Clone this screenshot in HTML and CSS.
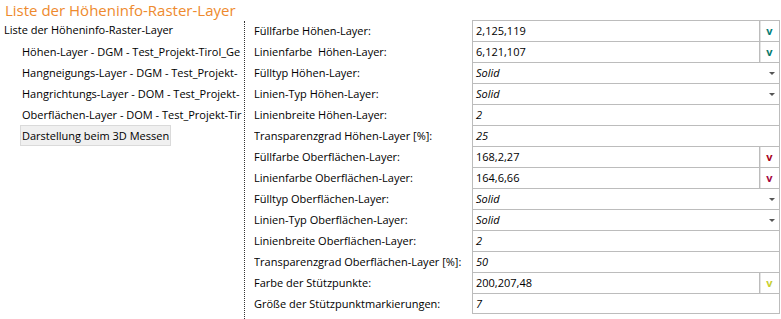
FILE: index.html
```html
<!DOCTYPE html>
<html lang="de">
<head>
  <meta charset="UTF-8">
  <title>Höheninfo-Raster-Layer</title>
  <link rel="stylesheet" href="styles.css">
</head>
<body>
  <h1 class="title">Liste der Höheninfo-Raster-Layer</h1>
  <div class="main">
    <div class="tree">
      <div class="tree-root">Liste der Höheninfo-Raster-Layer</div>
      <div class="tree-item">Höhen-Layer - DGM - Test_Projekt-Tirol_Ge</div>
      <div class="tree-item">Hangneigungs-Layer - DGM - Test_Projekt-</div>
      <div class="tree-item">Hangrichtungs-Layer - DOM - Test_Projekt-</div>
      <div class="tree-item">Oberflächen-Layer - DOM - Test_Projekt-Tir</div>
      <div class="tree-item"><span class="selected">Darstellung beim 3D Messen</span></div>
    </div>

    <div class="props">
      <div class="row">
        <div class="label">Füllfarbe Höhen-Layer:</div>
        <div class="value"><span class="text">2,125,119</span><span class="color-btn" style="color: rgb(2,125,119);">v</span></div>
      </div>
      <div class="row">
        <div class="label">Linienfarbe&nbsp; Höhen-Layer:</div>
        <div class="value"><span class="text">6,121,107</span><span class="color-btn" style="color: rgb(6,121,107);">v</span></div>
      </div>
      <div class="row">
        <div class="label">Fülltyp Höhen-Layer:</div>
        <div class="value"><span class="text italic">Solid</span><span class="arrow"></span></div>
      </div>
      <div class="row">
        <div class="label">Linien-Typ Höhen-Layer:</div>
        <div class="value"><span class="text italic">Solid</span><span class="arrow"></span></div>
      </div>
      <div class="row">
        <div class="label">Linienbreite Höhen-Layer:</div>
        <div class="value"><span class="text italic">2</span></div>
      </div>
      <div class="row">
        <div class="label">Transparenzgrad Höhen-Layer [%]:</div>
        <div class="value"><span class="text italic">25</span></div>
      </div>
      <div class="row">
        <div class="label">Füllfarbe Oberflächen-Layer:</div>
        <div class="value"><span class="text">168,2,27</span><span class="color-btn" style="color: rgb(168,2,27);">v</span></div>
      </div>
      <div class="row">
        <div class="label">Linienfarbe Oberflächen-Layer:</div>
        <div class="value"><span class="text">164,6,66</span><span class="color-btn" style="color: rgb(164,6,66);">v</span></div>
      </div>
      <div class="row">
        <div class="label">Fülltyp Oberflächen-Layer:</div>
        <div class="value"><span class="text italic">Solid</span><span class="arrow"></span></div>
      </div>
      <div class="row">
        <div class="label">Linien-Typ Oberflächen-Layer:</div>
        <div class="value"><span class="text italic">Solid</span><span class="arrow"></span></div>
      </div>
      <div class="row">
        <div class="label">Linienbreite Oberflächen-Layer:</div>
        <div class="value"><span class="text italic">2</span></div>
      </div>
      <div class="row">
        <div class="label">Transparenzgrad Oberflächen-Layer [%]:</div>
        <div class="value"><span class="text italic">50</span></div>
      </div>
      <div class="row">
        <div class="label">Farbe der Stützpunkte:</div>
        <div class="value"><span class="text">200,207,48</span><span class="color-btn" style="color: rgb(200,207,48);">v</span></div>
      </div>
      <div class="row last">
        <div class="label">Größe der Stützpunktmarkierungen:</div>
        <div class="value"><span class="text italic">7</span></div>
      </div>
    </div>
  </div>
</body>
</html>
```

FILE: styles.css
```css
body {
  margin: 0;
  background: #fff;
  color: #000;
  font-family: "Open Sans", "Noto Sans", sans-serif;
  font-size: 11px;
  width: 781px;
  height: 319px;
  overflow: hidden;
}
.title {
  margin: 0;
  padding-left: 5px;
  height: 20px;
  line-height: 20px;
  font-size: 15px;
  font-weight: normal;
  color: #ee8a2e;
}
.main {
  display: flex;
  height: 299px;
}
.tree {
  width: 244px;
  border-right: 1px dotted #333;
  margin-top: 1px;
  overflow: hidden;
}
.tree-root {
  height: 20px;
  line-height: 18px;
  padding-left: 4px;
  white-space: nowrap;
}
.tree-item {
  height: 21px;
  line-height: 21px;
  padding-left: 22px;
  white-space: nowrap;
  overflow: hidden;
}
.selected {
  display: inline-block;
  margin-left: -2px;
  padding: 0 1px;
  line-height: 19px;
  background: #f0f0f0;
  border: 1px solid #dadada;
}
.props {
  padding-left: 9px;
}
.row {
  display: flex;
  height: 21px;
}
.label {
  width: 218px;
  line-height: 21px;
  white-space: nowrap;
  overflow: hidden;
}
.value {
  width: 306px;
  display: flex;
  align-items: center;
  border: 1px solid #bcbcbc;
  border-bottom: none;
}
.last .value {
  border-bottom: 1px solid #bcbcbc;
}
.text {
  flex: 1;
  padding-left: 3px;
  line-height: 20px;
}
.italic {
  font-style: italic;
}
.color-btn {
  width: 19px;
  height: 20px;
  line-height: 20px;
  text-align: center;
  font-weight: bold;
  border-left: 1px solid #bcbcbc;
  box-shadow: inset 1px 0 0 #e4e4e4;
}
.arrow {
  width: 0;
  height: 0;
  margin-right: 4px;
  border-left: 3px solid transparent;
  border-right: 3px solid transparent;
  border-top: 3px solid #555;
}
```
